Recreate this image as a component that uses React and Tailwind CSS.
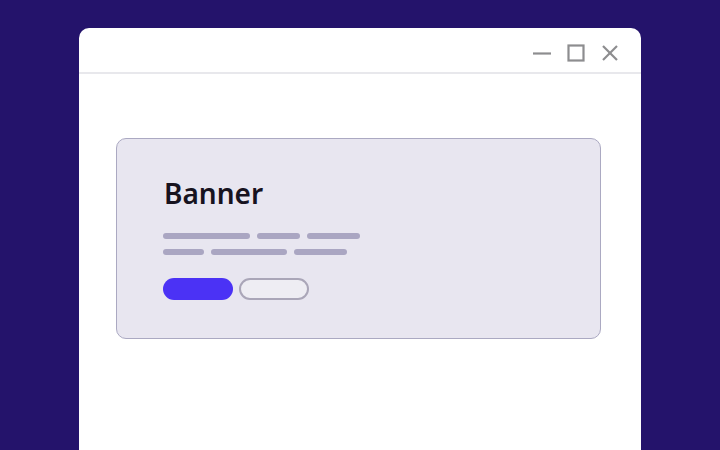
import React from 'react';

const Bar = ({ w }) => <div className={`h-[6px] rounded-full bg-[#aaa6c2] ${w}`} />;

const WindowControls = () => (
  <div className="flex items-start pt-[16px] pr-[22px] gap-[16px]">
    <svg width="18" height="18" viewBox="0 0 18 18" fill="none" stroke="#8d8d8f" strokeWidth="2.2">
      <line x1="0" y1="9.5" x2="18" y2="9.5" />
    </svg>
    <svg width="18" height="18" viewBox="0 0 18 18" fill="none" stroke="#8d8d8f" strokeWidth="2.2">
      <rect x="1.5" y="1.5" width="15" height="15" />
    </svg>
    <svg width="18" height="18" viewBox="0 0 18 18" fill="none" stroke="#8d8d8f" strokeWidth="2.2">
      <line x1="2" y1="2" x2="16" y2="16" />
      <line x1="16" y1="2" x2="2" y2="16" />
    </svg>
  </div>
);

const App = () => {
  return (
    <div className="h-[450px] w-[720px] overflow-hidden bg-[#24136b] pt-[28px] pl-[79px] font-['Noto_Sans',sans-serif]">
      <div className="w-[562px] h-[422px] bg-white rounded-t-[10px] flex flex-col">
        <div className="h-[46px] flex justify-end border-b-2 border-[#e8e8ec]">
          <WindowControls />
        </div>

        <div className="flex-1 bg-white pt-[64px] pl-[37px] pr-[40px]">
          <div className="h-[201px] rounded-[10px] border border-[#aba9c2] bg-[#e8e6f0] pt-[40px] pl-[46px]">
            <h1 className="text-[28px] leading-none font-semibold text-[#17131f] h-[28px] pl-[1px]">Banner</h1>

            <div className="mt-[26px] flex flex-col gap-[10px]">
              <div className="flex gap-[7px]">
                <Bar w="w-[87px]" />
                <Bar w="w-[43px]" />
                <Bar w="w-[53px]" />
              </div>
              <div className="flex gap-[7px]">
                <Bar w="w-[41px]" />
                <Bar w="w-[76px]" />
                <Bar w="w-[53px]" />
              </div>
            </div>

            <div className="mt-[23px] flex gap-[6px]">
              <button className="w-[70px] h-[22px] rounded-full bg-[#4b32f5]" />
              <button className="w-[70px] h-[22px] rounded-full border-2 border-[#aaa6b8] bg-[#eeedf3]" />
            </div>
          </div>
        </div>
      </div>
    </div>
  );
};

export default App;
